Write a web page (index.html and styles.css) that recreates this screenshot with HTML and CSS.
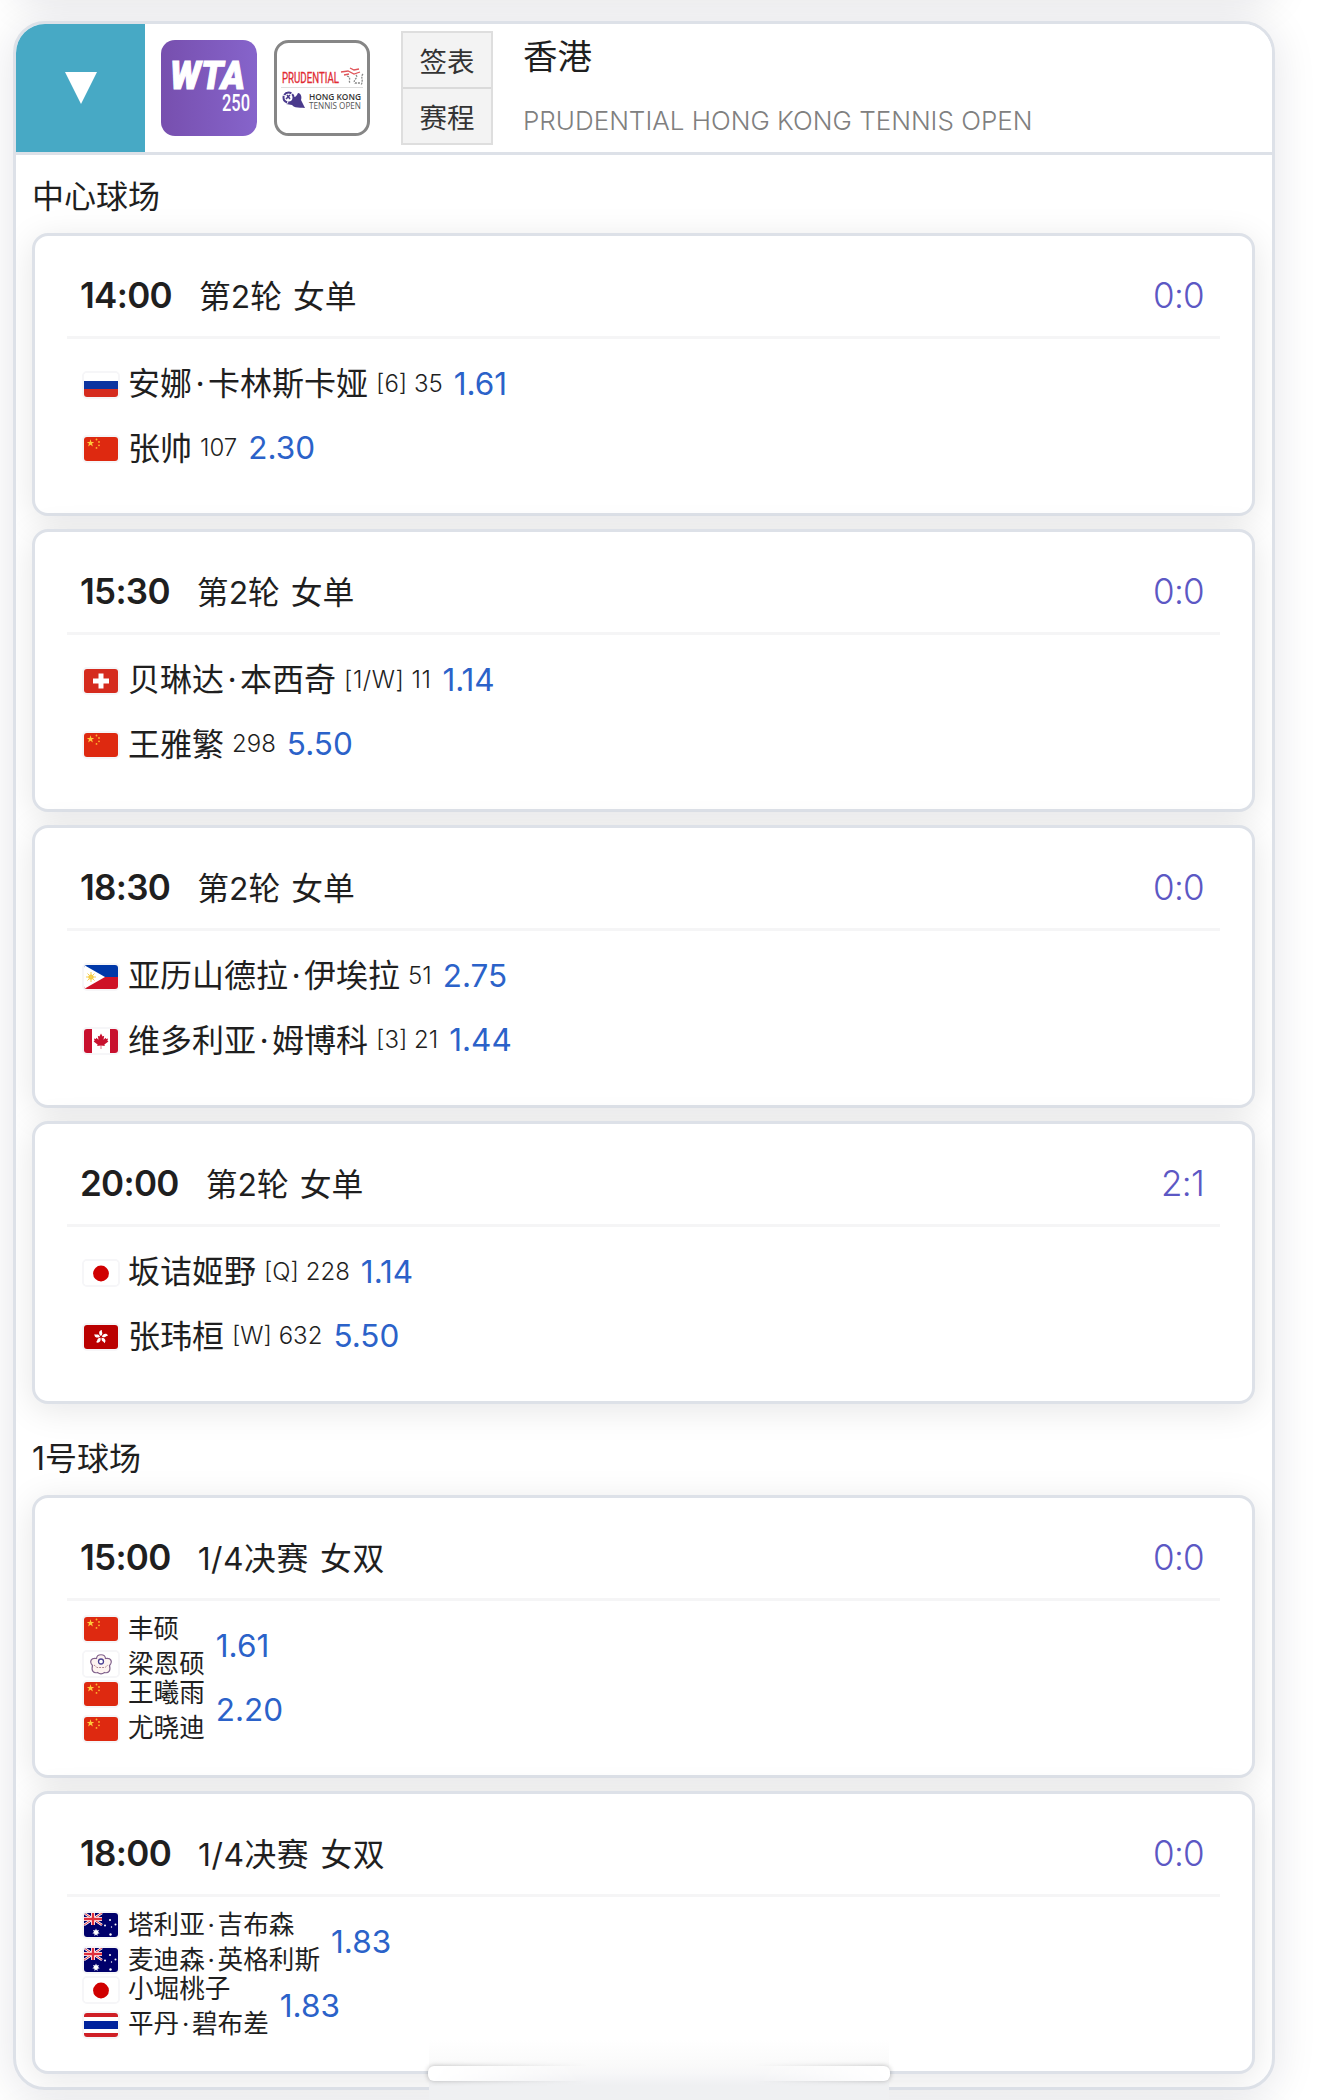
FILE: index.html
```html
<!DOCTYPE html>
<html lang="zh-CN">
<head>
  <meta charset="UTF-8" />
  <meta name="viewport" content="width=device-width, initial-scale=1.0"/>
  <title>香港 - 赛程</title>
  <link rel="stylesheet" href="styles.css">
</head>
<body>
  <!-- Flags -->
  <svg class="defs" width="0" height="0">
    <symbol id="ru" viewBox="0 0 34 24"><path fill="#fff" d="M0 0h34v8H0z"/><path fill="#0c34a0" d="M0 8h34v8H0z"/><path fill="#d52b1e" d="M0 16h34v8H0z"/></symbol>
    <symbol id="cn" viewBox="0 0 34 24"><path fill="#de2910" d="M0 0h34v24H0z"/><path fill="#ffc93c" d="M6.5 2.2l.9 2.7h2.9L8 6.600l.9 2.800-2.400-1.700-2.400 1.700.900-2.800-2.300-1.700h2.900z"/><g fill="#ffb42e"><circle cx="12.500" cy="2.500" r=".9"/><circle cx="15" cy="5" r=".9"/><circle cx="15" cy="8.300" r=".9"/><circle cx="12.500" cy="10.900" r=".9"/></g></symbol>
    <symbol id="ch" viewBox="0 0 34 24"><path fill="#d52b1e" d="M0 0h34v24H0z"/><path fill="#fff" d="M14.500 4.500h5v5h5.500v5h-5.500v5h-5v-5H9v-5h5.500z"/></symbol>
    <symbol id="ph" viewBox="0 0 34 24"><path fill="#0038a8" d="M0 0h34v12H0z"/><path fill="#ce1126" d="M0 12h34v12H0z"/><path fill="#fff" d="M0 0l21 12L0 24z"/><circle cx="7" cy="12" r="2.600" fill="#f8c92a"/><path stroke="#f3cf55" stroke-width="1" d="M7 7v10M2 12h10M3.500 8.500l7 7M10.500 8.500l-7 7"/></symbol>
    <symbol id="ca" viewBox="0 0 34 24"><path fill="#fff" d="M0 0h34v24H0z"/><path fill="#c8102e" d="M0 0h8v24H0zM26 0h8v24h-8zM17 4.500l1.600 3 1.600-.8-.7 4 2.200-2 .4 1.200 2-.4-.7 2.200 1 .7-4 3 .4 1.600-3.500-.4V20h-.600v-3.400l-3.500.4.400-1.600-4-3 1-.7-.7-2.200 2 .4.400-1.200 2.200 2-.7-4 1.600.8z"/></symbol>
    <symbol id="jp" viewBox="0 0 34 24"><path fill="#fff" d="M0 0h34v24H0z"/><circle cx="17" cy="12.500" r="7.900" fill="#d00000"/></symbol>
    <symbol id="hk" viewBox="0 0 34 24"><path fill="#ba0000" d="M0 0h34v24H0z"/><g fill="#fff" transform="translate(17 12)"><path id="petal" d="M0-1C-3-3-2-7 1-7 0-5 3-4 0-1z"/><use href="#petal" transform="rotate(72)"/><use href="#petal" transform="rotate(144)"/><use href="#petal" transform="rotate(216)"/><use href="#petal" transform="rotate(288)"/></g></symbol>
    <symbol id="tpe" viewBox="0 0 34 24"><path fill="#fff" d="M0 0h34v24H0z"/><path fill="#fdf3f0" stroke="#81618c" stroke-width="1.200" d="M12.500 6.500C13 1.500 21 1.500 21.500 6.500c5.500-1 7.500 3 4 7 1.500 5.500-1 8-5 7-2 1.500-5 1.500-7 0-4 1-6.500-1.500-5-7-3.500-4-1.500-8 4-7z"/><circle cx="17" cy="9.500" r="2.500" fill="#fff" stroke="#4c4294" stroke-width="1.300"/><path stroke="#b08a91" stroke-width="1" stroke-dasharray="2 1" fill="none" d="M10 13l3 2.500h8l3-2.500"/></symbol>
    <symbol id="au" viewBox="0 0 34 24"><path fill="#00006b" d="M0 0h34v24H0z"/><path stroke="#fff" stroke-width="2.600" d="M0 0l18 12M18 0L0 12"/><path stroke="#e0303c" stroke-width="1" d="M0 0l18 12M18 0L0 12"/><path stroke="#fff" stroke-width="4" d="M9 0v12M0 6h18"/><path stroke="#e0303c" stroke-width="2.400" d="M9 0v12M0 6h18"/><path fill="#fff" d="M12 15.500l.9 2 2.100-.5-1 1.900 1.700 1.400-2.200.4V23L12 21.600 10.500 23v-2.300l-2.200-.4 1.700-1.400-1-1.900 2.100.5z"/><g fill="#fff"><circle cx="26" cy="7" r="1"/><circle cx="21" cy="12.500" r="1"/><circle cx="31.500" cy="11.500" r="1"/><circle cx="27.500" cy="14" r=".7"/><circle cx="26.500" cy="21.500" r="1.200"/></g></symbol>
    <symbol id="th" viewBox="0 0 34 24"><path fill="#fff" d="M0 0h34v24H0z"/><path fill="#cf1f26" d="M0 0h34v4H0zM0 20h34v4H0z"/><path fill="#00229c" d="M0 8h34v8H0z"/></symbol>
  </svg>

  <div class="tour tour-prev"></div>

  <div class="tour">
    <div class="tour-header">
      <div class="toggle">
        <svg width="32" height="32" viewBox="0 0 32 32"><path fill="#fff" d="M0 0h32L16 32z"/></svg>
      </div>
      <svg class="logo" viewBox="0 0 96 96">
        <defs><linearGradient id="wta"><stop offset="0" stop-color="#774fae"/><stop offset="1" stop-color="#8664cb"/></linearGradient></defs>
        <rect width="96" height="96" rx="14" fill="url(#wta)"/>
        <text class="wta-name" x="9" y="49" textLength="75" lengthAdjust="spacingAndGlyphs">WTA</text>
        <text class="wta-level" x="61" y="71" textLength="28" lengthAdjust="spacingAndGlyphs">250</text>
      </svg>
      <svg class="logo" viewBox="0 0 96 96">
        <rect x="1.500" y="1.500" width="93" height="93" rx="13" fill="#fff" stroke="#868686" stroke-width="3"/>
        <text class="pru" x="8" y="42.500" textLength="57" lengthAdjust="spacingAndGlyphs">PRUDENTIAL</text>
        <g fill="none" stroke-width="1.300"><path stroke="#e0555a" d="M67 32l7-1 6 3 6-2M70 35l5-1M76 28l4 2 5-1"/><path stroke="#888" stroke-dasharray="2 1" d="M73 36c5 2 1 4 3 7M82 35c3 3-4 5-1 8h5M89 34c-3 3 1 6-2 11"/></g>
        <path stroke="#ddd" d="M7 47.500h82"/>
        <circle cx="14.500" cy="57.500" r="5" fill="none" stroke="#4a3a8c" stroke-width="2" stroke-dasharray="8 1"/>
        <path stroke="#4a3a8c" stroke-width="1.500" d="M12 59l4-4M13 55l3 4"/>
        <path fill="#4a3a8c" d="M20 57c2 0 3-2 4-4 3 0 4 4 3 7l4 8c-5-1-10 1-13-3l-6-1c4-1 7-3 8-7z"/>
        <text class="hk-name" x="35" y="60" textLength="52" lengthAdjust="spacingAndGlyphs">HONG KONG</text>
        <text class="hk-open" x="35" y="68.500" textLength="52" lengthAdjust="spacingAndGlyphs">TENNIS OPEN</text>
      </svg>
      <div class="links">
        <div class="link">签表</div>
        <div class="link">赛程</div>
      </div>
      <div class="tour-name">
        <div class="city">香港</div>
        <div class="full-name">PRUDENTIAL HONG KONG TENNIS OPEN</div>
      </div>
    </div>

    <div class="court">中心球场</div>

    <div class="match">
      <div class="match-head"><span class="time">14:00</span><span class="round">第2轮 女单</span><span class="score">0:0</span></div>
      <div class="team"><svg class="flag"><use href="#ru"/></svg><span class="name">安娜<span class="dot">·</span>卡林斯卡娅</span><span class="rank">[6] 35</span><span class="odds">1.61</span></div>
      <div class="team"><svg class="flag"><use href="#cn"/></svg><span class="name">张帅</span><span class="rank">107</span><span class="odds">2.30</span></div>
    </div>

    <div class="match">
      <div class="match-head"><span class="time">15:30</span><span class="round">第2轮 女单</span><span class="score">0:0</span></div>
      <div class="team"><svg class="flag"><use href="#ch"/></svg><span class="name">贝琳达<span class="dot">·</span>本西奇</span><span class="rank rank-wide">[1/W] 11</span><span class="odds">1.14</span></div>
      <div class="team"><svg class="flag"><use href="#cn"/></svg><span class="name">王雅繁</span><span class="rank">298</span><span class="odds">5.50</span></div>
    </div>

    <div class="match">
      <div class="match-head"><span class="time">18:30</span><span class="round">第2轮 女单</span><span class="score">0:0</span></div>
      <div class="team"><svg class="flag"><use href="#ph"/></svg><span class="name">亚历山德拉<span class="dot">·</span>伊埃拉</span><span class="rank">51</span><span class="odds">2.75</span></div>
      <div class="team"><svg class="flag"><use href="#ca"/></svg><span class="name">维多利亚<span class="dot">·</span>姆博科</span><span class="rank">[3] 21</span><span class="odds">1.44</span></div>
    </div>

    <div class="match">
      <div class="match-head"><span class="time">20:00</span><span class="round">第2轮 女单</span><span class="score">2:1</span></div>
      <div class="team"><svg class="flag"><use href="#jp"/></svg><span class="name">坂诘姬野</span><span class="rank">[Q] 228</span><span class="odds">1.14</span></div>
      <div class="team"><svg class="flag"><use href="#hk"/></svg><span class="name">张玮桓</span><span class="rank">[W] 632</span><span class="odds">5.50</span></div>
    </div>

    <div class="court">1号球场</div>

    <div class="match">
      <div class="match-head"><span class="time">15:00</span><span class="round double-round">1/4决赛 女双</span><span class="score">0:0</span></div>
      <div class="team double">
        <div class="pair">
          <div class="player"><svg class="flag"><use href="#cn"/></svg><span class="name">丰硕</span></div>
          <div class="player"><svg class="flag"><use href="#tpe"/></svg><span class="name">梁恩硕</span></div>
        </div>
        <span class="odds">1.61</span>
      </div>
      <div class="team double">
        <div class="pair">
          <div class="player"><svg class="flag"><use href="#cn"/></svg><span class="name">王曦雨</span></div>
          <div class="player"><svg class="flag"><use href="#cn"/></svg><span class="name">尤晓迪</span></div>
        </div>
        <span class="odds">2.20</span>
      </div>
    </div>

    <div class="match">
      <div class="match-head"><span class="time">18:00</span><span class="round double-round">1/4决赛 女双</span><span class="score">0:0</span></div>
      <div class="team double">
        <div class="pair">
          <div class="player"><svg class="flag"><use href="#au"/></svg><span class="name">塔利亚<span class="dot">·</span>吉布森</span></div>
          <div class="player"><svg class="flag"><use href="#au"/></svg><span class="name">麦迪森<span class="dot">·</span>英格利斯</span></div>
        </div>
        <span class="odds">1.83</span>
      </div>
      <div class="team double">
        <div class="pair">
          <div class="player"><svg class="flag"><use href="#jp"/></svg><span class="name">小堀桃子</span></div>
          <div class="player"><svg class="flag"><use href="#th"/></svg><span class="name">平丹<span class="dot">·</span>碧布差</span></div>
        </div>
        <span class="odds">1.83</span>
      </div>
    </div>
  </div>

  <div class="tour tour-next"></div>

  <div class="home-bar"><div class="home-pill"></div></div>
</body>
</html>
```

FILE: styles.css
```css
:root {
  --border: #dde1e8;
  --text: #1f1f1f;
  --odds: #2b62c9;
  --score: #5c58c4;
  --teal: #47a9c5;
}

* {
  box-sizing: border-box;
}

body {
  position: relative;
  margin: 0;
  height: 2100px;
  overflow: hidden;
  background-color: #fff;
  color: var(--text);
  font-family: Inter, "Noto Sans CJK SC", sans-serif;
}

.defs {
  position: absolute;
}

.tour {
  width: 1262px;
  height: 2069px;
  margin: 0 0 23px 13px;
  border: 3px solid var(--border);
  border-radius: 32px;
  background-color: #fff;
  box-shadow: 0 5px 44px rgba(20, 20, 50, 0.11);
  overflow: hidden;
}

.tour-prev {
  height: 60px;
  margin-top: -62px;
}

.tour-next {
  height: 60px;
}

.tour-header {
  display: flex;
  align-items: center;
  height: 131px;
  border-bottom: 3px solid var(--border);
  background-color: #fff;
}

.toggle {
  display: flex;
  align-items: center;
  justify-content: center;
  width: 129px;
  height: 128px;
  background-color: var(--teal);
}

.logo {
  width: 96px;
  height: 96px;
  margin-left: 17px;
  overflow: visible;
}

.toggle + .logo {
  margin-left: 16px;
}

.wta-name {
  font: italic 900 38px Roboto, sans-serif;
  fill: #fff;
  stroke: #fff;
}

.wta-level {
  font: 500 24px Roboto, sans-serif;
  fill: #fff;
}

.pru {
  font: 14px Roboto, sans-serif;
  fill: #e12a32;
  stroke: #e12a32;
  stroke-width: 0.3px;
}

.hk-name {
  font: 600 9.500px "Open Sans", sans-serif;
  fill: #333;
}

.hk-open {
  font: 8.500px "Open Sans", sans-serif;
  fill: #555;
}

.links {
  width: 92px;
  margin-left: 31px;
  border: 2px solid #dedede;
  background-color: #f3f3f3;
}

.link {
  height: 54px;
  color: #333;
  font-size: 27.500px;
  line-height: 59px;
  text-align: center;
}

.link + .link {
  height: 56px;
  border-top: 2px solid #dadada;
}

.tour-name {
  margin-left: 30px;
}

.city {
  height: 64px;
  font-size: 34.500px;
  line-height: 66px;
  margin-top: -4px;
}

.full-name {
  height: 60px;
  color: #808080;
  font-size: 26px;
  font-weight: 300;
  line-height: 66px;
}

.court {
  height: 78px;
  padding-left: 16px;
  font-size: 32px;
  line-height: 83px;
}

.match {
  width: 1223px;
  height: 283px;
  margin: 0 0 13px 16px;
  padding: 0 32px;
  border: 3px solid var(--border);
  border-radius: 16px;
  background-color: #fff;
  box-shadow: 0 6px 34px rgba(10, 10, 20, 0.1);
}

.match-head {
  display: flex;
  align-items: center;
  height: 103px;
  padding: 15px 16px 0 13px;
  border-bottom: 3px solid #f5f5f6;
  margin-bottom: 12px;
}

.time {
  margin-top: 3px;
  font-size: 35px;
  font-weight: 600;
  letter-spacing: -0.700px;
}

.round {
  margin-left: 27px;
  font-size: 31.800px;
  word-spacing: 2px;
}

.double-round {
  letter-spacing: 0.500px;
}

.score {
  margin-top: 3px;
  margin-left: auto;
  color: var(--score);
  font-size: 35px;
  font-weight: 350;
  letter-spacing: -0.700px;
}

.team {
  display: flex;
  align-items: center;
  height: 64.500px;
  padding-left: 15px;
}

.flag {
  flex: none;
  width: 38px;
  height: 28px;
  border: 2px solid #f6f6f8;
  border-radius: 5px;
  margin-top: 3px;
}

.name {
  margin-top: -4px;
  margin-left: 8px;
  font-size: 32px;
  white-space: nowrap;
}

.dot {
  display: inline-block;
  width: 0.500em;
  text-align: center;
}

.rank {
  margin-left: 8px;
  font-size: 24px;
  font-weight: 350;
}

.rank-wide {
  letter-spacing: 0.500px;
}

.odds {
  margin-left: 11px;
  color: var(--odds);
  font-size: 31.500px;
}

.player {
  display: flex;
  align-items: center;
  height: 35px;
}

.player .name {
  margin-top: -3px;
  font-size: 25.600px;
}

/* home indicator over the bottom edge */
.home-bar {
  position: absolute;
  left: 423px;
  top: 2040px;
  width: 472px;
  height: 60px;
  padding-top: 20px;
  background: linear-gradient(#fff, #fafafa 40%, #f7f7f8 55%, #eff0f2 75%) 6px 0 / 460px 60px no-repeat;
}

.home-pill {
  height: 27px;
  padding: 6px 5px;
  -webkit-mask-image: linear-gradient(90deg, #000, transparent 35%, transparent 70%, #000);
  mask-image: linear-gradient(90deg, #000, transparent 35%, transparent 70%, #000);
}

.home-pill::before {
  content: "";
  display: block;
  height: 15px;
  border-radius: 6px;
  background-color: #fff;
  box-shadow: 0 0 5px rgba(0, 0, 0, 0.3);
}
```
